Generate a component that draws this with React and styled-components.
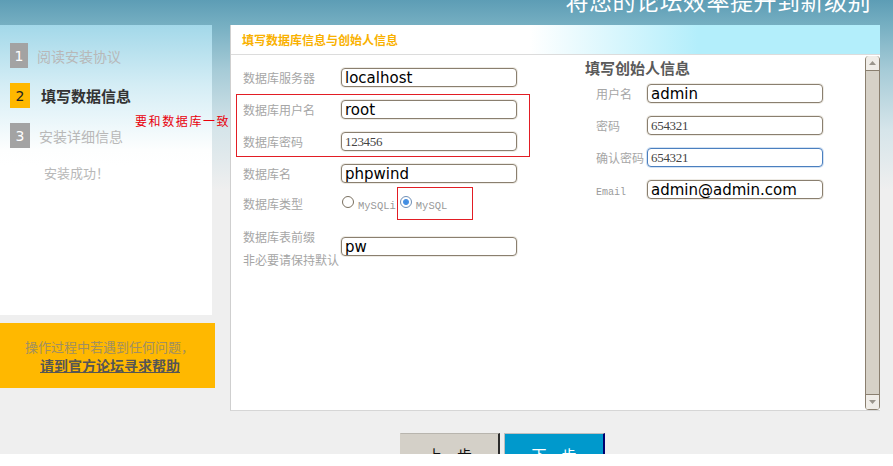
import styled, { createGlobalStyle } from 'styled-components';

const GlobalStyle = createGlobalStyle`
  html, body {
    margin: 0;
    padding: 0;
  }
  body {
    font-family: "Noto Sans CJK SC", "Noto Sans", sans-serif;
    background: #fff;
  }
`;

const Page = styled.div`
  width: 893px;
  height: 454px;
  overflow: hidden;
  position: relative;
  background: linear-gradient(
    180deg,
    #5d9db5 0px,
    #76afc2 25px,
    #a6cbd7 70px,
    #d6e5ea 130px,
    #efefef 190px
  );
`;

const Banner = styled.div`
  height: 25px;
  overflow: hidden;
  text-align: right;
  padding-right: 22px;
`;

const BannerText = styled.div`
  margin-top: -12px;
  font-size: 23px;
  line-height: 24px;
  color: #fff;
  letter-spacing: 0.5px;
`;

const Main = styled.div`
  display: flex;
  align-items: flex-start;
  position: relative;
`;

const Aside = styled.div`
  width: 215px;
  display: flex;
  flex-direction: column;
`;

const Sidebar = styled.div`
  width: 212px;
  height: 290px;
  box-sizing: border-box;
  padding: 18px 0 0 10px;
  background: linear-gradient(180deg, #a3d8e9 0px, #d4edf5 60px, #fdfefe 125px, #fff 140px);
`;

const Step = styled.div`
  display: flex;
  align-items: center;
  height: 25px;
  margin-bottom: 15px;
`;

const StepNum = styled.span`
  width: ${(p) => (p.$first ? 18 : 20)}px;
  height: 25px;
  display: flex;
  align-items: center;
  justify-content: center;
  font-family: "DejaVu Sans", sans-serif;
  font-size: 14px;
  color: ${(p) => (p.$active ? '#222' : '#fff')};
  background: ${(p) => (p.$active ? '#ffb800' : '#a3a3a3')};
`;

const StepText = styled.span`
  margin-left: ${(p) => p.$indent}px;
  font-size: ${(p) => (p.$active ? 15 : 14)}px;
  font-weight: ${(p) => (p.$active ? 700 : 400)};
  color: ${(p) => (p.$active ? '#333' : '#b8b8b8')};
`;

const Done = styled.div`
  margin: 8px 0 0 34px;
  font-size: 13px;
  color: #b8b8b8;
`;

const Help = styled.div`
  margin-top: 8px;
  height: 65px;
  box-sizing: border-box;
  padding: 15px 0 0 25px;
  background: #ffb800;
`;

const HelpText = styled.div`
  font-size: 13px;
  line-height: 18px;
  color: #a08f62;
`;

const HelpLink = styled.a`
  display: block;
  margin-left: 15px;
  font-size: 14px;
  line-height: 18px;
  font-weight: 700;
  color: #555;
  text-decoration: underline;
  cursor: pointer;
`;

const Note = styled.div`
  position: absolute;
  left: 135px;
  top: 87px;
  font-size: 12px;
  letter-spacing: 1.6px;
  color: #e8000b;
  white-space: nowrap;
`;

const Panel = styled.div`
  margin-left: 15px;
  width: 650px;
  height: 386px;
  box-sizing: border-box;
  border-left: 1px solid #cfcfcf;
  border-bottom: 1px solid #d6d6d6;
  background: #fff;
  display: flex;
  flex-direction: column;
`;

const PanelHead = styled.div`
  height: 30px;
  box-sizing: border-box;
  border-bottom: 1px solid #dcdcdc;
  padding-left: 11px;
  display: flex;
  align-items: center;
  font-size: 12px;
  font-weight: 700;
  color: #f9b100;
  background: linear-gradient(90deg, #fff 0%, #fff 46%, #b3eefb 72%, #b3eefb 100%);
`;

const PanelBody = styled.div`
  flex: 1;
  display: flex;
  min-height: 0;
`;

const FormArea = styled.div`
  flex: 1;
  display: grid;
  grid-template-columns: 342px 1fr;
  padding: 13px 0 0 12px;
`;

const Column = styled.div`
  display: flex;
  flex-direction: column;
`;

const FieldRow = styled.div`
  display: flex;
  align-items: ${(p) => p.$align || 'center'};
  margin-top: ${(p) => p.$gap ?? 13}px;
  min-height: ${(p) => p.$height || 19}px;
`;

const Marked = styled.div`
  width: 294px;
  box-sizing: border-box;
  margin: ${(p) => p.$gap}px 0 0 -7px;
  padding: 5px 0 5px 6px;
  border: 1px solid #e21d24;
  display: flex;
  flex-direction: column;
`;

const Label = styled.span`
  width: ${(p) => p.$width || 98}px;
  margin-left: ${(p) => p.$indent || 0}px;
  flex-shrink: 0;
  font-size: 12px;
  line-height: ${(p) => p.$lh || 'normal'};
  color: #a6a6a6;
  white-space: nowrap;
`;

const LatinLabel = styled(Label)`
  padding-top: 5px;
  font-family: "Liberation Mono", monospace;
  font-size: 10px;
  color: #9a9a9a;
`;

const Input = styled.div`
  width: 176px;
  height: 19px;
  box-sizing: border-box;
  margin-top: ${(p) => p.$offset || 0}px;
  border: 1px solid ${(p) => (p.$focus ? '#4b7fbf' : '#8a7f6f')};
  border-radius: 4px;
  background: #fff;
  box-shadow: 0 0 0 1px ${(p) => (p.$focus ? '#d3e2f3' : '#eeebe5')};
  padding-left: 3px;
  display: flex;
  align-items: center;
  overflow: hidden;
  white-space: nowrap;
  font-family: ${(p) => (p.$serif ? '"Liberation Serif", serif' : '"DejaVu Sans", sans-serif')};
  font-size: ${(p) => (p.$serif ? 13 : 15)}px;
  letter-spacing: ${(p) => (p.$serif ? '-0.3px' : '0')};
  color: ${(p) => (p.$serif ? '#444' : '#000')};
`;

const Options = styled.div`
  display: flex;
  align-items: stretch;
  height: 33px;
`;

const Option = styled.label`
  display: flex;
  align-items: center;
  box-sizing: border-box;
  height: 33px;
  padding: ${(p) => (p.$marked ? '0 25px 0 2px' : '0 1px 0 1px')};
  border: ${(p) => (p.$marked ? '1px solid #e21d24' : 'none')};
`;

const Radio = styled.span`
  width: 12px;
  height: 12px;
  box-sizing: border-box;
  border-radius: 50%;
  border: 1px solid ${(p) => (p.$checked ? '#6f8fb6' : '#7a7060')};
  background: ${(p) =>
    p.$checked
      ? 'radial-gradient(circle, #3f8be0 0, #4a92e4 2.5px, #fff 3.5px)'
      : '#fff'};
  margin-top: -3px;
`;

const OptionText = styled.span`
  margin-left: 4px;
  padding-top: 5px;
  font-family: "Liberation Mono", monospace;
  font-size: 10.5px;
  color: #999;
`;

const SectionTitle = styled.div`
  margin-top: -10px;
  font-size: 15px;
  line-height: 20px;
  font-weight: 700;
  color: #5a5a5a;
`;

const ScrollBar = styled.div`
  width: 15px;
  margin-top: 1px;
  display: flex;
  flex-direction: column;
  box-sizing: border-box;
  border-left: 1px solid #8a7f6f;
  border-right: 1px solid #8a7f6f;
  border-radius: 4px;
  background: #d6d1c7;
  overflow: hidden;
`;

const ScrollButton = styled.div`
  height: 14px;
  display: flex;
  align-items: center;
  justify-content: center;
  background: #f0ede8;
  border-top: ${(p) => (p.$down ? '1px solid #8a7f6f' : 'none')};
  border-bottom: 1px solid #8a7f6f;
`;

const Track = styled.div`
  flex: 1;
`;

const Actions = styled.div`
  display: flex;
  gap: 4px;
  padding: 22px 0 0 400px;
`;

const Button = styled.button`
  width: ${(p) => (p.$primary ? 101 : 100)}px;
  height: 42px;
  box-sizing: border-box;
  padding: 0;
  border: none;
  border-top: 1px solid ${(p) => (p.$primary ? '#bfbfbf' : '#b8b5ae')};
  border-left: 1px solid ${(p) => (p.$primary ? '#bfbfbf' : '#d4d0c8')};
  border-right: 2px solid ${(p) => (p.$primary ? '#00006e' : '#2b2b2b')};
  background: ${(p) => (p.$primary ? '#0099cc' : '#d4d0c8')};
  color: ${(p) => (p.$primary ? '#fff' : '#111')};
  font-family: "Noto Sans CJK SC", sans-serif;
  font-size: 15px;
  cursor: pointer;
`;

const Arrow = ({ down }) => (
  <svg width="7" height="4" viewBox="0 0 7 4">
    <path d={down ? 'M0 0h7L3.5 4z' : 'M3.5 0L7 4H0z'} fill="#9a958c" />
  </svg>
);

const steps = [
  { n: 1, text: '阅读安装协议', indent: 9 },
  { n: 2, text: '填写数据信息', indent: 11, active: true },
  { n: 3, text: '安装详细信息', indent: 9 },
];

const founder = [
  { label: '用户名', value: 'admin' },
  { label: '密码', value: '654321', serif: true },
  { label: '确认密码', value: '654321', serif: true, focus: true },
  { label: 'Email', value: 'admin@admin.com', latin: true },
];

const App = () => {
  return (
    <Page>
      <GlobalStyle />
      <Banner>
        <BannerText>将您的论坛效率提升到新级别</BannerText>
      </Banner>
      <Main>
        <Aside>
          <Sidebar>
            {steps.map((s) => (
              <Step key={s.n}>
                <StepNum $active={s.active} $first={s.n === 1}>
                  {s.n}
                </StepNum>
                <StepText $active={s.active} $indent={s.indent}>
                  {s.text}
                </StepText>
              </Step>
            ))}
            <Done>安装成功！</Done>
          </Sidebar>
          <Help>
            <HelpText>操作过程中若遇到任何问题，</HelpText>
            <HelpLink>请到官方论坛寻求帮助</HelpLink>
          </Help>
        </Aside>

        <Panel>
          <PanelHead>填写数据库信息与创始人信息</PanelHead>
          <PanelBody>
            <FormArea>
              <Column>
                <FieldRow $gap={0}>
                  <Label>数据库服务器</Label>
                  <Input>localhost</Input>
                </FieldRow>
                <Marked $gap={7}>
                  <FieldRow $gap={0}>
                    <Label>数据库用户名</Label>
                    <Input>root</Input>
                  </FieldRow>
                  <FieldRow>
                    <Label>数据库密码</Label>
                    <Input $serif>123456</Input>
                  </FieldRow>
                </Marked>
                <FieldRow $gap={7}>
                  <Label>数据库名</Label>
                  <Input>phpwind</Input>
                </FieldRow>
                <FieldRow $gap={4} $height={33}>
                  <Label>数据库类型</Label>
                  <Options>
                    <Option>
                      <Radio />
                      <OptionText>MySQLi</OptionText>
                    </Option>
                    <Option $marked>
                      <Radio $checked />
                      <OptionText>MySQL</OptionText>
                    </Option>
                  </Options>
                </FieldRow>
                <FieldRow $gap={5} $align="flex-start">
                  <Label $lh="23px">
                    数据库表前缀
                    <br />
                    非必要请保持默认
                  </Label>
                  <Input $offset={12}>pw_</Input>
                </FieldRow>
              </Column>
              <Column>
                <SectionTitle>填写创始人信息</SectionTitle>
                {founder.map((f, i) => {
                  const L = f.latin ? LatinLabel : Label;
                  return (
                    <FieldRow key={f.label} $gap={i === 0 ? 6 : 13}>
                      <L $width={51} $indent={11}>
                        {f.label}
                      </L>
                      <Input $serif={f.serif} $focus={f.focus}>
                        {f.value}
                      </Input>
                    </FieldRow>
                  );
                })}
              </Column>
            </FormArea>
            <ScrollBar>
              <ScrollButton>
                <Arrow />
              </ScrollButton>
              <Track />
              <ScrollButton $down>
                <Arrow down />
              </ScrollButton>
            </ScrollBar>
          </PanelBody>
        </Panel>
        <Note>要和数据库一致</Note>
      </Main>
      <Actions>
        <Button>上一步</Button>
        <Button $primary>下一步</Button>
      </Actions>
    </Page>
  );
};

export default App;
